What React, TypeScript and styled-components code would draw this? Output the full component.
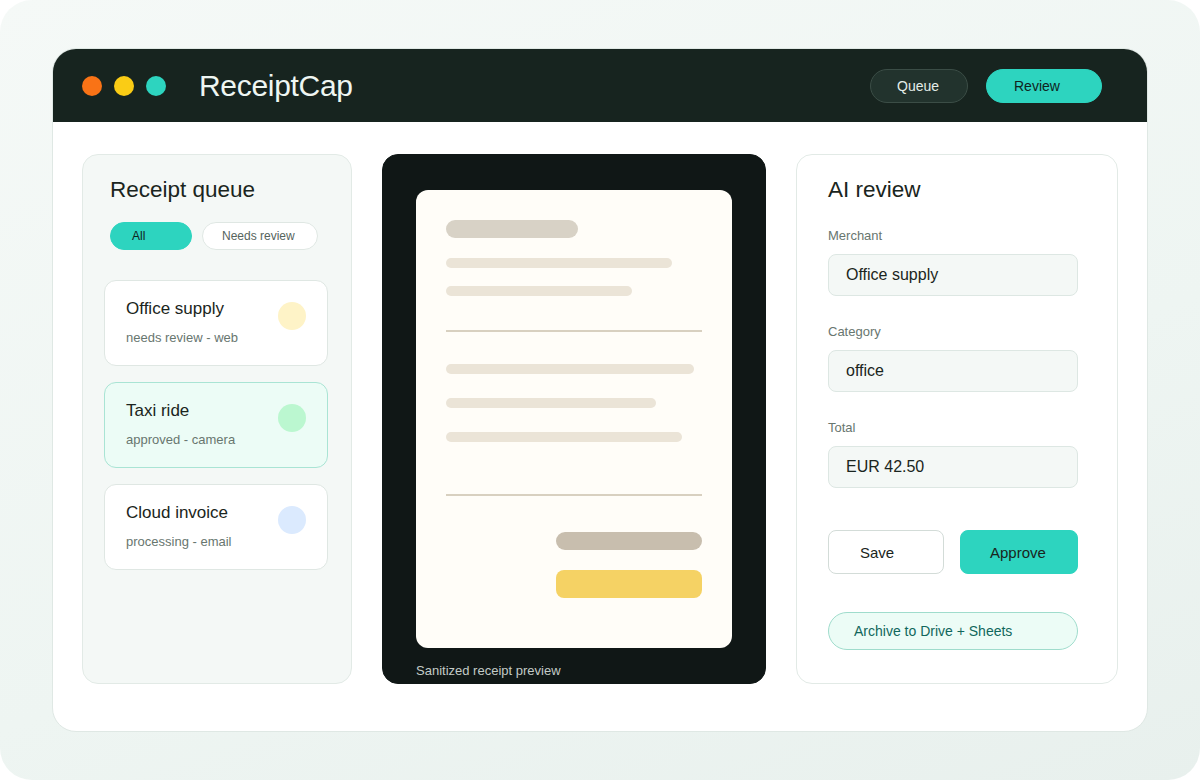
import styled, {createGlobalStyle} from "styled-components";

const colors = {
    ink: '#17241f',
    text: '#1a2520',
    muted: '#68766f',
    teal: '#2dd4bf',
    line: '#e2eae6',
    soft: '#f4f8f6',
};

const GlobalStyle = createGlobalStyle`
    body {
        margin: 0;
        background: #ffffff;
        font-family: "Liberation Sans", Arial, sans-serif;
    }
`

const queue = [
    {title: 'Office supply', meta: 'needs review - web', dot: '#fef3c7', active: false},
    {title: 'Taxi ride', meta: 'approved - camera', dot: '#bbf7d0', active: true},
    {title: 'Cloud invoice', meta: 'processing - email', dot: '#dbeafe', active: false},
];

const fields = [
    {label: 'Merchant', value: 'Office supply'},
    {label: 'Category', value: 'office'},
    {label: 'Total', value: 'EUR 42.50'},
];

export default function App() {
    return (<>
        <GlobalStyle/>
        <Page>
            <Window>
                <Header>
                    <Dots>
                        <Dot color="#f97316"/>
                        <Dot color="#facc15"/>
                        <Dot color="#2dd4bf"/>
                    </Dots>
                    <Brand>ReceiptCap</Brand>
                    <Nav>
                        <NavButton width={98}>Queue</NavButton>
                        <NavButton width={116} primary>Review</NavButton>
                    </Nav>
                </Header>
                <Content>
                    <QueuePanel>
                        <PanelTitle>Receipt queue</PanelTitle>
                        <Chips>
                            <Chip width={82} active>All</Chip>
                            <Chip width={116}>Needs review</Chip>
                        </Chips>
                        <CardList>
                            {queue.map(q => (<Card key={q.title} active={q.active}>
                                <div>
                                    <CardTitle>{q.title}</CardTitle>
                                    <CardMeta>{q.meta}</CardMeta>
                                </div>
                                <StatusDot color={q.dot}/>
                            </Card>))}
                        </CardList>
                    </QueuePanel>

                    <PreviewPanel>
                        <Paper>
                            <Bar width={132} height={18} color="#d8d2c6"/>
                            <Bar width={226} height={10} gap={20} color="#ebe4d7"/>
                            <Bar width={186} height={10} gap={18} color="#ebe4d7"/>
                            <Rule gap={34}/>
                            <Bar width={248} height={10} gap={32} color="#ebe4d7"/>
                            <Bar width={210} height={10} gap={24} color="#ebe4d7"/>
                            <Bar width={236} height={10} gap={24} color="#ebe4d7"/>
                            <Rule gap={52}/>
                            <Bar width={146} height={18} gap={36} color="#c8beae" right/>
                            <Bar width={146} height={28} gap={20} color="#f5d264" radius={8} right/>
                        </Paper>
                        <Caption>Sanitized receipt preview</Caption>
                    </PreviewPanel>

                    <ReviewPanel>
                        <PanelTitle>AI review</PanelTitle>
                        {fields.map(f => (<Field key={f.label}>
                            <FieldLabel>{f.label}</FieldLabel>
                            <FieldValue>{f.value}</FieldValue>
                        </Field>))}
                        <Actions>
                            <ActionButton width={116} inset={31}>Save</ActionButton>
                            <ActionButton width={118} inset={29} primary>Approve</ActionButton>
                        </Actions>
                        <ArchiveButton>Archive to Drive + Sheets</ArchiveButton>
                    </ReviewPanel>
                </Content>
            </Window>
        </Page>
    </>)
}

const Page = styled.div`
    width: 1200px;
    height: 780px;
    box-sizing: border-box;
    padding: 48px 52px;
    border-radius: 32px;
    background: linear-gradient(160deg, #f5f9f7 0%, #eef5f2 60%, #e8f0ed 100%);
`

const Window = styled.div`
    width: 1096px;
    height: 684px;
    box-sizing: border-box;
    border: 1px solid #dfe8e4;
    border-radius: 24px;
    background: #ffffff;
    overflow: hidden;
    display: flex;
    flex-direction: column;
`

const Header = styled.div`
    height: 73px;
    flex-shrink: 0;
    background: ${colors.ink};
    display: flex;
    align-items: center;
    padding: 0 45px 0 29px;
`

const Dots = styled.div`
    display: flex;
    gap: 12px;
`

const Dot = styled.span<{ color: string }>`
    width: 20px;
    height: 20px;
    border-radius: 50%;
    background: ${props => props.color};
`

const Brand = styled.div`
    margin-left: 33px;
    font-size: 30px;
    color: #eef6f2;
    letter-spacing: -0.3px;
`

const Nav = styled.div`
    margin-left: auto;
    display: flex;
    gap: 18px;
`

const NavButton = styled.div<{ width: number, primary?: boolean }>`
    width: ${props => props.width}px;
    height: 34px;
    box-sizing: border-box;
    padding-left: ${props => props.primary ? 27 : 26}px;
    display: flex;
    align-items: center;
    border-radius: 17px;
    font-size: 14px;
    background: ${props => props.primary ? colors.teal : '#22332d'};
    border: 1px solid ${props => props.primary ? colors.teal : '#3b4d46'};
    color: ${props => props.primary ? '#10231d' : '#e4ede8'};
`

const Content = styled.div`
    flex: 1;
    display: grid;
    grid-template-columns: 270px 384px 322px;
    gap: 30px;
    padding: 32px 29px 47px;
`

const Panel = styled.div`
    box-sizing: border-box;
    border-radius: 16px;
    border: 1px solid ${colors.line};
`

const QueuePanel = styled(Panel)`
    background: ${colors.soft};
    padding: 21px 23px 0 27px;
`

const PanelTitle = styled.div`
    font-size: 22.5px;
    line-height: 28px;
    color: ${colors.text};
`

const Chips = styled.div`
    display: flex;
    gap: 10px;
    margin-top: 18px;
`

const Chip = styled.div<{ width: number, active?: boolean }>`
    width: ${props => props.width}px;
    height: 28px;
    box-sizing: border-box;
    padding-left: ${props => props.active ? 21 : 19}px;
    display: flex;
    align-items: center;
    border-radius: 14px;
    font-size: 12px;
    background: ${props => props.active ? colors.teal : '#ffffff'};
    border: 1px solid ${props => props.active ? colors.teal : '#dfe7e3'};
    color: ${props => props.active ? '#10231d' : '#56645d'};
`

const CardList = styled.div`
    display: flex;
    flex-direction: column;
    gap: 16px;
    margin: 30px 0 0 -6px;
`

const Card = styled.div<{ active?: boolean }>`
    height: 86px;
    box-sizing: border-box;
    padding: 17px 21px 0 21px;
    display: flex;
    justify-content: space-between;
    border-radius: 12px;
    background: ${props => props.active ? '#ecfcf6' : '#ffffff'};
    border: 1px solid ${props => props.active ? '#a9e4d4' : '#dfe7e3'};
`

const CardTitle = styled.div`
    font-size: 17px;
    line-height: 22px;
    color: ${colors.text};
`

const CardMeta = styled.div`
    font-size: 13px;
    line-height: 16px;
    margin-top: 10px;
    color: ${colors.muted};
`

const StatusDot = styled.span<{ color: string }>`
    width: 28px;
    height: 28px;
    margin-top: 4px;
    border-radius: 50%;
    background: ${props => props.color};
    flex-shrink: 0;
`

const PreviewPanel = styled(Panel)`
    background: #101716;
    border-color: #101716;
    padding: 35px 33px 0;
    display: flex;
    flex-direction: column;
`

const Paper = styled.div`
    height: 458px;
    box-sizing: border-box;
    background: #fffdf8;
    border-radius: 12px;
    padding: 30px;
    display: flex;
    flex-direction: column;
`

const Bar = styled.div<{ width: number, height: number, color: string, gap?: number, radius?: number, right?: boolean }>`
    width: ${props => props.width}px;
    height: ${props => props.height}px;
    margin-top: ${props => props.gap || 0}px;
    align-self: ${props => props.right ? 'flex-end' : 'flex-start'};
    border-radius: ${props => props.radius ?? props.height / 2}px;
    background: ${props => props.color};
    flex-shrink: 0;
`

const Rule = styled.div<{ gap: number }>`
    height: 2px;
    margin-top: ${props => props.gap}px;
    background: #d8d0c0;
    flex-shrink: 0;
`

const Caption = styled.div`
    margin-top: 15px;
    font-size: 13px;
    color: #c3cbc7;
`

const ReviewPanel = styled(Panel)`
    background: #ffffff;
    padding: 21px 39px 0 31px;
`

const Field = styled.div`
    margin-top: 24px;

    & + & {
        margin-top: 28px;
    }
`

const FieldLabel = styled.div`
    font-size: 13px;
    line-height: 16px;
    color: ${colors.muted};
`

const FieldValue = styled.div`
    margin-top: 10px;
    height: 42px;
    box-sizing: border-box;
    padding: 0 17px;
    display: flex;
    align-items: center;
    border-radius: 8px;
    background: ${colors.soft};
    border: 1px solid #dde7e3;
    font-size: 16px;
    color: ${colors.text};
`

const Actions = styled.div`
    display: flex;
    gap: 16px;
    margin-top: 42px;
`

const ActionButton = styled.div<{ width: number, inset: number, primary?: boolean }>`
    width: ${props => props.width}px;
    height: 44px;
    box-sizing: border-box;
    padding-left: ${props => props.inset}px;
    display: flex;
    align-items: center;
    border-radius: 8px;
    font-size: 15px;
    color: ${colors.text};
    background: ${props => props.primary ? colors.teal : '#ffffff'};
    border: 1px solid ${props => props.primary ? colors.teal : '#d3dcd8'};
`

const ArchiveButton = styled.div`
    margin-top: 38px;
    height: 38px;
    box-sizing: border-box;
    padding-left: 25px;
    display: flex;
    align-items: center;
    border-radius: 19px;
    background: #ecfcf6;
    border: 1px solid #9fdccc;
    font-size: 14px;
    color: #11675c;
`
